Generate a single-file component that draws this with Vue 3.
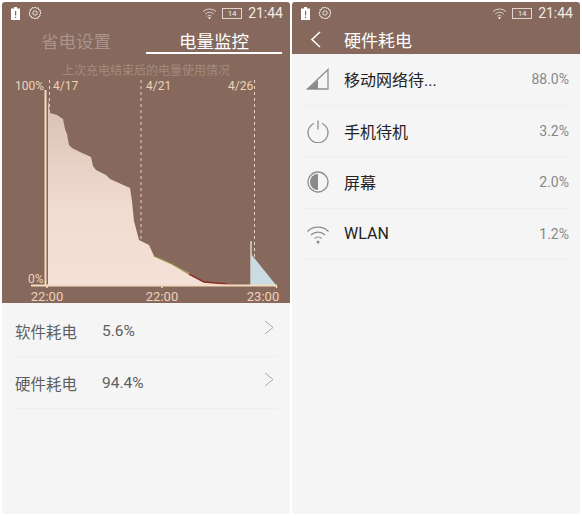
<script setup>
const softRows = [
  { name: '软件耗电', value: '5.6%' },
  { name: '硬件耗电', value: '94.4%' },
]
const hardRows = [
  { name: '移动网络待...', value: '88.0%', icon: 'signal' },
  { name: '手机待机', value: '3.2%', icon: 'power' },
  { name: '屏幕', value: '2.0%', icon: 'screen' },
  { name: 'WLAN', value: '1.2%', icon: 'wifi' },
]
</script>

<template>
  <div class="page">
    <section class="screen">
      <div class="brown">
        <div class="status">
          <svg class="batt-low" width="9" height="13" viewBox="0 0 9 13">
            <path d="M3 0h3v1.500h3V13H0V1.500h3z" fill="#fff" />
            <path d="M4 4h1.200v4.500H4zM4 9.700h1.200V11H4z" fill="#86695c" />
          </svg>
          <svg class="gear" width="14" height="14" viewBox="0 0 14 14" fill="none" stroke="#e9e2de">
            <circle cx="7" cy="7" r="2.200" />
            <path d="M7 1l1.300 1.300 1.800-.5.500 1.800 1.800.5-.5 1.800L13 7l-1.300 1.300.5 1.800-1.800.5-.5 1.800-1.800-.5L7 13l-1.300-1.300-1.800.5-.5-1.800-1.800-.5.5-1.800L1 7l1.300-1.300-.5-1.800 1.800-.5.5-1.800 1.800.5z" />
          </svg>
          <span class="grow"></span>
          <svg width="15" height="11" viewBox="0 0 15 11" fill="none" stroke="#d9cfc9" stroke-width="1">
            <path d="M1 3.600a9.300 9.300 0 0 1 13 0M3.200 6a6.200 6.200 0 0 1 8.600 0M5.400 8.200a3 3 0 0 1 4.200 0" />
            <circle cx="7.500" cy="10" r="1" fill="#fff" stroke="none" />
          </svg>
          <span class="batt-box">14</span>
          <span class="time">21:44</span>
        </div>
        <div class="tabs">
          <div class="tab">省电设置</div>
          <div class="tab active">电量监控</div>
        </div>
        <div class="since">上次充电结束后的电量使用情况</div>
        <svg class="chart" width="288" height="226" viewBox="0 0 288 226">
          <defs>
            <linearGradient id="fillA" x1="0" y1="0" x2="0" y2="1">
              <stop offset="0" stop-color="#d9bfb3" />
              <stop offset="0.6" stop-color="#f1dcd1" />
              <stop offset="1" stop-color="#f4e0d6" />
            </linearGradient>
          </defs>
          <g transform="translate(-2,-78)">
            <text x="15" y="89" class="lbl">100%</text>
            <text x="53" y="89" class="lbl">4/17</text>
            <text x="146" y="89" class="lbl">4/21</text>
            <text x="228" y="89" class="lbl">4/26</text>
            <text x="28" y="282" class="lbl">0%</text>
            <g stroke="#e6d3c4" stroke-width="1" stroke-dasharray="3 3">
              <path d="M49.500 79V284M141 79V240M254.500 79V284" />
            </g>
            <path d="M48 98L50 112L57 114L63 118L65 128L67 133L69 144L72 147L80 151L91 156L93 165L96 169L106 174L110 178L130 187L132 200L134 220L139 239L149 244L154 255L172 263L189 272L204 281L227 283V284H48Z" fill="url(#fillA)" />
            <path d="M154 255L172 263L189 273" fill="none" stroke="#9a8a45" stroke-width="1.200" />
            <path d="M189 273L204 281L227 283" fill="none" stroke="#8a2a25" stroke-width="1.500" />
            <path d="M251 253L276 284H251Z" fill="#cbdbe2" />
            <path d="M251 240V284" stroke="#d9d5cf" stroke-width="1.500" />
            <path d="M45.500 89V285" stroke="#f3dcc0" stroke-width="2" />
            <path d="M31 284.500H277" stroke="#f3dcc0" stroke-width="2" />
            <path d="M47 285v2M162 285v2M276.500 285v2" stroke="#f3dcc0" stroke-width="1.500" />
            <text x="47" y="300" text-anchor="middle" class="lbl axis">22:00</text>
            <text x="162" y="300" text-anchor="middle" class="lbl axis">22:00</text>
            <text x="263" y="300" text-anchor="middle" class="lbl axis">23:00</text>
          </g>
        </svg>
      </div>
      <div class="list soft">
        <div v-for="row in softRows" :key="row.name" class="soft-row">
          <span class="soft-name">{{ row.name }}</span>
          <span class="soft-val">{{ row.value }}</span>
          <svg class="chev" width="10" height="15" viewBox="0 0 10 15" fill="none" stroke="#aaa" stroke-width="1">
            <path d="M1 1l8 6.500-8 6.500" />
          </svg>
        </div>
      </div>
    </section>

    <section class="screen">
      <div class="brown head">
        <div class="status">
          <svg class="batt-low" width="9" height="13" viewBox="0 0 9 13">
            <path d="M3 0h3v1.500h3V13H0V1.500h3z" fill="#fff" />
            <path d="M4 4h1.200v4.500H4zM4 9.700h1.200V11H4z" fill="#86695c" />
          </svg>
          <svg class="gear" width="14" height="14" viewBox="0 0 14 14" fill="none" stroke="#e9e2de">
            <circle cx="7" cy="7" r="2.200" />
            <path d="M7 1l1.300 1.300 1.800-.5.500 1.800 1.800.5-.5 1.800L13 7l-1.300 1.300.5 1.800-1.800.5-.5 1.800-1.800-.5L7 13l-1.300-1.300-1.800.5-.5-1.800-1.800-.5.5-1.800L1 7l1.300-1.300-.5-1.800 1.800-.5.5-1.800 1.800.5z" />
          </svg>
          <span class="grow"></span>
          <svg width="15" height="11" viewBox="0 0 15 11" fill="none" stroke="#d9cfc9" stroke-width="1">
            <path d="M1 3.600a9.300 9.300 0 0 1 13 0M3.200 6a6.200 6.200 0 0 1 8.600 0M5.400 8.200a3 3 0 0 1 4.200 0" />
            <circle cx="7.500" cy="10" r="1" fill="#fff" stroke="none" />
          </svg>
          <span class="batt-box">14</span>
          <span class="time">21:44</span>
        </div>
        <div class="title-row">
          <svg width="11" height="17" viewBox="0 0 11 17" fill="none" stroke="#fff" stroke-width="1.600">
            <path d="M10 1L2 8.500l8 7.500" />
          </svg>
          <span class="title">硬件耗电</span>
        </div>
      </div>
      <div class="list hard">
        <div v-for="row in hardRows" :key="row.name" class="hard-row">
          <svg class="ico" width="24" height="24" viewBox="0 0 24 24" fill="none" stroke="#8f8f8f" stroke-width="1.300">
            <template v-if="row.icon === 'signal'">
              <path d="M22 2.500V22H1.500z" />
              <path d="M12 13V22H2z" fill="#8a8a8a" stroke="none" />
            </template>
            <template v-else-if="row.icon === 'power'">
              <path d="M8 4.500a10 10 0 1 0 8 0" />
              <path d="M12 1.500v9" />
            </template>
            <template v-else-if="row.icon === 'screen'">
              <circle cx="12" cy="12" r="10" />
              <path d="M12 4a8 8 0 0 0 0 16z" fill="#8a8a8a" stroke="none" />
            </template>
            <template v-else>
              <path d="M1.500 9.500a15 15 0 0 1 21 0M5 13a10 10 0 0 1 14 0M8.500 16.500a5 5 0 0 1 7 0" />
              <circle cx="12" cy="20" r="1.500" fill="#8a8a8a" stroke="none" />
            </template>
          </svg>
          <span class="hard-name">{{ row.name }}</span>
          <span class="hard-val">{{ row.value }}</span>
        </div>
      </div>
    </section>
  </div>
</template>

<style scoped>
.page {
  display: flex;
  gap: 2px;
  width: 582px;
  height: 516px;
  padding: 2px;
  box-sizing: border-box;
  background: #fff;
  font-family: "Roboto", "Noto Sans CJK SC", sans-serif;
}
.screen {
  width: 288px;
  height: 512px;
  display: flex;
  flex-direction: column;
  background: #f5f5f5;
  border-radius: 3px;
  overflow: hidden;
}
.brown {
  background: #86695c;
  display: flex;
  flex-direction: column;
  height: 301px;
  flex: none;
}
.head {
  height: 52px;
}
.status {
  height: 22px;
  display: flex;
  align-items: center;
  padding: 0 7px 0 9px;
  flex: none;
}
.batt-low {
  margin-right: 8px;
}
.grow {
  flex: 1;
}
.batt-box {
  width: 18px;
  height: 9px;
  margin-left: 5px;
  border: 1px solid #e0d7d2;
  font-size: 8px;
  line-height: 9px;
  text-align: center;
  color: #f0e9e5;
}
.time {
  margin-left: 6px;
  color: #f2ece8;
  font-size: 14px;
}
.tabs {
  display: flex;
  height: 30px;
  padding: 0 8px 0 4px;
  flex: none;
}
.tab {
  flex: 1;
  text-align: center;
  font-size: 17.500px;
  line-height: 36px;
  color: #a8948a;
}
.tab:first-child {
  flex: none;
  width: 140px;
}
.active {
  color: #fff;
  border-bottom: 2px solid #fff;
}
.since {
  height: 24px;
  line-height: 34px;
  text-align: center;
  font-size: 12px;
  color: #a3897c;
  flex: none;
}
.chart {
  display: block;
  margin-top: 1px;
  flex: none;
}
.lbl {
  font-size: 12px;
  fill: #edd3b8;
  font-family: "Roboto", sans-serif;
}
.axis {
  font-size: 13px;
}
.list {
  flex: 1;
}
.soft {
  padding: 2px 13px 0 13px;
}
.soft-row {
  display: flex;
  align-items: center;
  height: 51px;
  margin-bottom: 1px;
  box-shadow: 0 1px 0 #eeeeee;
  position: relative;
  color: #5f5f5f;
  font-size: 15.500px;
}
.soft-name {
  width: 87px;
}
.chev {
  position: absolute;
  right: 3px;
  top: 15px;
}
.hard {
  padding: 0 11px 0 12px;
}
.hard-row {
  display: flex;
  align-items: center;
  height: 50.500px;
  margin-bottom: 1px;
  box-shadow: 0 1px 0 #eeeeee;
}
.ico {
  margin-left: 2px;
  flex: none;
}
.hard-name {
  margin-left: 14px;
  flex: 1;
  font-size: 16px;
  color: #222;
}
.hard-val {
  font-size: 14px;
  color: #888;
}
.title-row {
  display: flex;
  align-items: center;
  height: 30px;
  padding-left: 18px;
}
.title {
  margin-left: 23px;
  color: #fff;
  font-size: 17px;
}
</style>
